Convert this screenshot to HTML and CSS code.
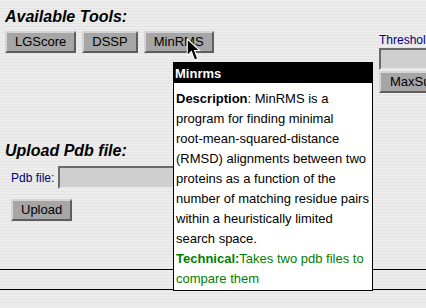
FILE: index.html
```html
<!DOCTYPE html>
<html lang="en">
<head>
    <meta charset="UTF-8">
    <meta name="viewport" content="width=device-width, initial-scale=1.0">
    <title>Structure Tools</title>
    <link rel="stylesheet" href="styles.css">
</head>
<body>
    <div class="page">
        <div class="tools-row">
            <div class="tools">
                <h2 class="section-title">Available Tools:</h2>
                <div class="button-row">
                    <button class="tool-button">LGScore</button>
                    <button class="tool-button">DSSP</button>
                    <button class="tool-button">MinRMS</button>
                </div>
            </div>
            <div class="threshold">
                <label class="field-label">Threshold</label>
                <div class="text-field small"></div>
                <button class="tool-button">MaxSub</button>
            </div>
        </div>

        <div class="upload">
            <h2 class="section-title">Upload Pdb file:</h2>
            <div class="file-row">
                <label class="field-label">Pdb file:</label>
                <div class="text-field wide"></div>
            </div>
            <button class="tool-button">Upload</button>
        </div>

        <div class="footer">
            <hr class="rule">
            <hr class="rule">
        </div>
    </div>

    <!-- tooltip shown while hovering MinRMS -->
    <div class="tooltip">
        <div class="tooltip-title">Minrms</div>
        <div class="tooltip-body">
            <b>Description</b>: MinRMS is a program for finding minimal <span class="nowrap">root-mean-squared-distance</span> (RMSD) alignments between two proteins as a function of the number of matching residue pairs within a heuristically limited search space.
            <div class="technical"><b>Technical:</b>Takes two pdb files to compare them</div>
        </div>
    </div>

    <svg class="cursor" width="15" height="25" viewBox="0 0 14 24">
        <path d="M1 1 L1 17 L5 13 L8 21 L11 20 L8 12 L13 12 Z" fill="#000" stroke="#fff" stroke-width="1"/>
    </svg>
</body>
</html>
```

FILE: styles.css
```css
body {
    margin: 0;
    font-family: "Liberation Sans", Arial, sans-serif;
    background-color: #e8e8e8;
    background-image: repeating-linear-gradient(to bottom, #ececec 0, #ececec 2px, #e4e4e4 2px, #e4e4e4 3px);
    height: 308px;
    overflow: hidden;
}

.page {
    padding: 7px 0 0 5px;
}

.tools-row {
    display: flex;
    justify-content: space-between;
    align-items: flex-start;
}

.section-title {
    margin: 0;
    font-size: 16px;
    font-weight: bold;
    font-style: italic;
    line-height: 20px;
    color: #000;
}

.button-row {
    display: flex;
    gap: 6px;
    margin-top: 4px;
}

.tool-button {
    font-family: "Liberation Sans", Arial, sans-serif;
    font-size: 13px;
    height: 22px;
    padding: 0 8px;
    background: #a6a6a6;
    color: #000;
    border: 2px solid;
    border-color: #d4d4d4 #5e5e5e #5e5e5e #d4d4d4;
    line-height: 18px;
}

.threshold {
    display: flex;
    flex-direction: column;
    width: 47px;
    padding-top: 26px;
    overflow: hidden;
}

.field-label {
    font-size: 12px;
    color: #000080;
    white-space: nowrap;
}

.text-field {
    background: #cfcfcf;
    border: 2px solid;
    border-color: #6a6a6a #e8e8e8 #e8e8e8 #6a6a6a;
}

.text-field.small {
    width: 60px;
    height: 18px;
    margin-top: 1px;
}

.threshold .tool-button {
    width: 70px;
    text-align: left;
    padding-left: 9px;
    margin-top: 1px;
}

.upload {
    margin-top: 48px;
}

.file-row {
    display: flex;
    align-items: center;
    gap: 4px;
    margin: 5px 0 0 6px;
}

.text-field.wide {
    width: 200px;
    height: 19px;
}

.upload .tool-button {
    margin: 10px 0 0 6px;
}

.footer {
    margin-top: 48px;
    margin-left: -5px;
}

.rule {
    margin: 0 0 19px 0;
    border: none;
    border-top: 1px solid #000;
}

.tooltip {
    position: absolute;
    left: 173px;
    top: 62px;
    width: 198px;
    border: 1px solid #000;
    background: #fff;
    font-size: 13px;
}

.tooltip-title {
    background: #000;
    color: #fff;
    font-weight: bold;
    height: 20px;
    line-height: 22px;
    padding-left: 1px;
}

.tooltip-body {
    padding: 6px 2px 1px 2px;
    line-height: 20px;
    color: #000;
}

.nowrap {
    white-space: nowrap;
}

.technical {
    color: #008000;
}

.cursor {
    position: absolute;
    left: 186px;
    top: 38px;
}
```
